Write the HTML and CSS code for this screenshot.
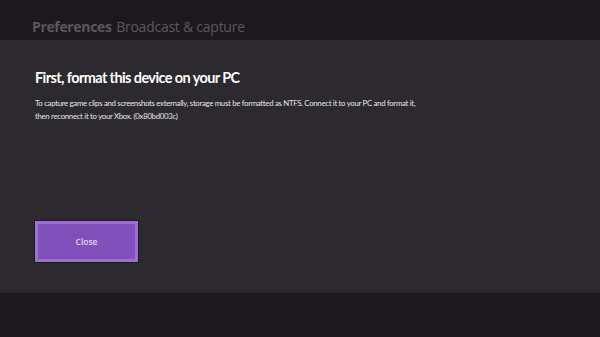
FILE: index.html
```html
<!DOCTYPE html>
<html lang="en">
<head>
    <meta charset="UTF-8">
    <title>Broadcast &amp; capture</title>
    <link rel="stylesheet" href="styles.css">
</head>
<body>
    <div class="header">
        <span class="crumb-main">Preferences</span>
        <span class="crumb-sub">Broadcast &amp; capture</span>
    </div>

    <div class="dialog">
        <h1>First, format this device on your PC</h1>
        <p>To capture game clips and screenshots externally, storage must be formatted as NTFS. Connect it to your PC and format it, then reconnect it to your Xbox. (0x80bd003c)</p>
        <button class="btn">Close</button>
    </div>

    <div class="footer"></div>
</body>
</html>
```

FILE: styles.css
```css
body {
    margin: 0;
    background-color: #1d181e;
    font-family: 'Open Sans', 'Noto Sans', sans-serif;
    color: #ffffff;
}

.header {
    height: 40px;
    box-sizing: border-box;
    padding: 17px 0 0 32px;
    font-size: 14px;
    line-height: 20px;
    color: #5c575e;
    white-space: nowrap;
}

.crumb-main {
    font-weight: 700;
    letter-spacing: -0.35px;
}

.crumb-sub {
    margin-left: 1px;
    letter-spacing: -0.25px;
}

.dialog {
    height: 253px;
    box-sizing: border-box;
    background-color: #2d2a2f;
    border-bottom: 1px solid #252227;
    padding: 27px 0 0 35px;
}

h1 {
    margin: 0;
    font-family: 'Lato', 'Open Sans', sans-serif;
    font-size: 14.5px;
    line-height: 22px;
    font-weight: 700;
    letter-spacing: -0.6px;
}

p {
    margin: 8px 0 0;
    width: 384px;
    font-family: 'Lato', 'Open Sans', sans-serif;
    font-size: 7.8px;
    line-height: 13px;
    letter-spacing: -0.3px;
    color: #e6e3e8;
}

.btn {
    display: block;
    margin: 98px 0 0 0;
    width: 103px;
    height: 41px;
    background-color: #8150bb;
    border: 3px solid #9b70cf;
    outline: 1px solid #1e1a20;
    color: #e2d4f2;
    font-family: inherit;
    font-size: 8.5px;
    font-weight: 600;
}

.footer {
    height: 44px;
}
```
